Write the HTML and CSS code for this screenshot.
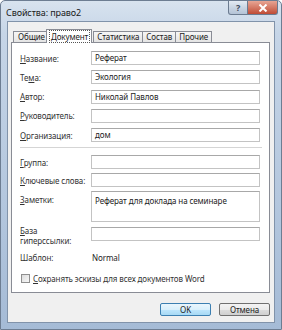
FILE: index.html
```html
<!DOCTYPE html>
<html lang="ru">
<head>
    <meta charset="UTF-8">
    <title>Свойства: право2</title>
    <link rel="stylesheet" href="styles.css">
</head>
<body>
    <div class="window">
        <div class="titlebar">
            <span class="title">Свойства: право2</span>
            <div class="caption-buttons">
                <span class="cap-btn help">?</span>
                <span class="cap-btn close">
                    <svg width="10" height="8" viewBox="0 0 10 8"><path d="M1.5 0.5 L8.5 7.5 M8.5 0.5 L1.5 7.5" stroke="#fff" stroke-width="2"/></svg>
                </span>
            </div>
        </div>
        <div class="client">
            <div class="tabs">
                <span class="tab">Общие</span>
                <span class="tab active"><span class="focus">Документ</span></span>
                <span class="tab">Статистика</span>
                <span class="tab">Состав</span>
                <span class="tab">Прочие</span>
            </div>
            <div class="panel">
                <div class="group first">
                    <div class="row"><span class="lbl"><u>Н</u>азвание:</span><span class="input">Реферат</span></div>
                    <div class="row"><span class="lbl">Те<u>м</u>а:</span><span class="input">Экология</span></div>
                    <div class="row"><span class="lbl"><u>А</u>втор:</span><span class="input">Николай Павлов</span></div>
                    <div class="row"><span class="lbl"><u>Р</u>уководитель:</span><span class="input"></span></div>
                    <div class="row"><span class="lbl"><u>О</u>рганизация:</span><span class="input">дом</span></div>
                </div>
                <div class="sep"></div>
                <div class="group second">
                    <div class="row"><span class="lbl"><u>Г</u>руппа:</span><span class="input"></span></div>
                    <div class="row"><span class="lbl"><u>К</u>лючевые слова:</span><span class="input"></span></div>
                    <div class="row notes"><span class="lbl"><u>З</u>аметки:</span><span class="input area">Реферат для доклада на семинаре</span></div>
                    <div class="row base"><span class="lbl"><u>Б</u>аза<br>гиперссылки:</span><span class="input"></span></div>
                    <div class="row plain"><span class="lbl">Шаблон:</span><span class="value">Normal</span></div>
                </div>
                <div class="check"><span class="box"></span><span><u>С</u>охранять эскизы для всех документов Word</span></div>
            </div>
            <div class="actions">
                <span class="btn default">OK</span>
                <span class="btn">Отмена</span>
            </div>
        </div>
    </div>
</body>
</html>
```

FILE: styles.css
```css
body {
    margin: 0;
    font-family: "Noto Sans", "DejaVu Sans", sans-serif;
    font-size: 8px;
    letter-spacing: -0.1px;
    color: #222;
}
.window {
    width: 282px;
    height: 330px;
    box-sizing: border-box;
    border: 1px solid #6d7d92;
    border-radius: 5px 5px 0 0;
    background: linear-gradient(180deg, #d8e3ef 0%, #c6d5e7 10%, #b4c7de 60%, #a5bbd6 100%);
    display: flex;
    flex-direction: column;
}
.titlebar {
    height: 20px;
    display: flex;
    justify-content: space-between;
    align-items: flex-start;
}
.title {
    margin: 5px 0 0 5px;
    font-size: 9px;
    color: #1a1a1a;
}
.caption-buttons {
    display: flex;
    margin-right: 3px;
}
.cap-btn {
    height: 13px;
    display: flex;
    align-items: center;
    justify-content: center;
    border: 1px solid #6b7b90;
    border-top: none;
}
.help {
    width: 18px;
    border-radius: 0 0 0 3px;
    background: linear-gradient(180deg, #e4ebf3 0%, #c9d5e3 50%, #b4c3d6 100%);
    color: #3c4a5c;
    font-size: 9px;
    font-weight: bold;
}
.close {
    width: 29px;
    border-left: none;
    border-radius: 0 0 3px 0;
    background: linear-gradient(180deg, #e7a594 0%, #d47a66 50%, #bf4b35 100%);
}
.client {
    flex: 1;
    margin: 0 6px 6px 6px;
    border: 1px solid #8193aa;
    background: #f0f0f0;
    display: flex;
    flex-direction: column;
}
.tabs {
    display: flex;
    align-items: flex-end;
    height: 20px;
    padding-left: 5px;
}
.tab {
    height: 10px;
    line-height: 10px;
    padding: 0 3px;
    border: 1px solid #898c95;
    border-bottom: none;
    margin-right: -1px;
    background: linear-gradient(180deg, #f6f6f6, #e4e4e4);
    color: #222;
}
.tab:first-child { padding: 0 3px 0 4px; }
.tab.active {
    height: 13px;
    line-height: 14px;
    background: #fff;
    margin: 0 1px -1px -2px;
    padding: 0 2px 0 3px;
    position: relative;
    z-index: 1;
}
.focus {
    outline: 1px dotted #555;
    outline-offset: 0;
    padding: 0 1px;
}
.panel {
    height: 251px;
    margin: 0 4px 0 3px;
    box-sizing: border-box;
    border: 1px solid #898c95;
    background: #fff;
    padding: 8px 7px 0 8px;
}
.group {
    display: flex;
    flex-direction: column;
}
.first { gap: 5.25px; }
.row {
    display: flex;
    align-items: center;
}
.lbl {
    width: 71px;
    flex: none;
    color: #333;
    line-height: 9px;
}
.input {
    width: 169px;
    height: 14px;
    box-sizing: border-box;
    border: 1px solid #c3c3c3;
    border-top-color: #a8a8a8;
    padding: 0 3px;
    line-height: 12px;
    color: #222;
}
.sep {
    height: 1px;
    background: #d5d5d5;
    margin: 5px 0 7px;
}
.second .row + .row { margin-top: 4px; }
.second .notes {
    margin-top: 6px;
    align-items: flex-start;
}
.notes .lbl { padding-top: 4px; }
.area {
    height: 31px;
    padding-top: 3px;
}
.second .base { margin-top: 6px; align-items: flex-start; }
.base .lbl { line-height: 10px; }
.base .input { margin-top: 1px; }
.second .plain { margin-top: 1px; height: 14px; }
.value { padding-left: 1px; }
.check {
    display: flex;
    align-items: center;
    margin-top: 9px;
    padding-left: 1px;
    gap: 3px;
    color: #333;
}
.box {
    width: 7px;
    height: 7px;
    border: 1px solid #8f8f8f;
    background: linear-gradient(135deg, #dcdcdc, #f8f8f8);
}
.actions {
    display: flex;
    justify-content: flex-end;
    gap: 8px;
    padding: 10px 4px 0 0;
}
.btn {
    width: 49px;
    height: 11px;
    line-height: 11px;
    text-align: center;
    border: 1px solid #707070;
    border-radius: 2px;
    background: linear-gradient(180deg, #f3f3f3 0%, #ebebeb 50%, #dddddd 51%, #cfcfcf 100%);
    color: #222;
}
.btn.default {
    border-color: #3c7fb1;
    background: linear-gradient(180deg, #eaf6fd 0%, #d9f0fc 50%, #bee6fd 51%, #a7d9f5 100%);
}
```
